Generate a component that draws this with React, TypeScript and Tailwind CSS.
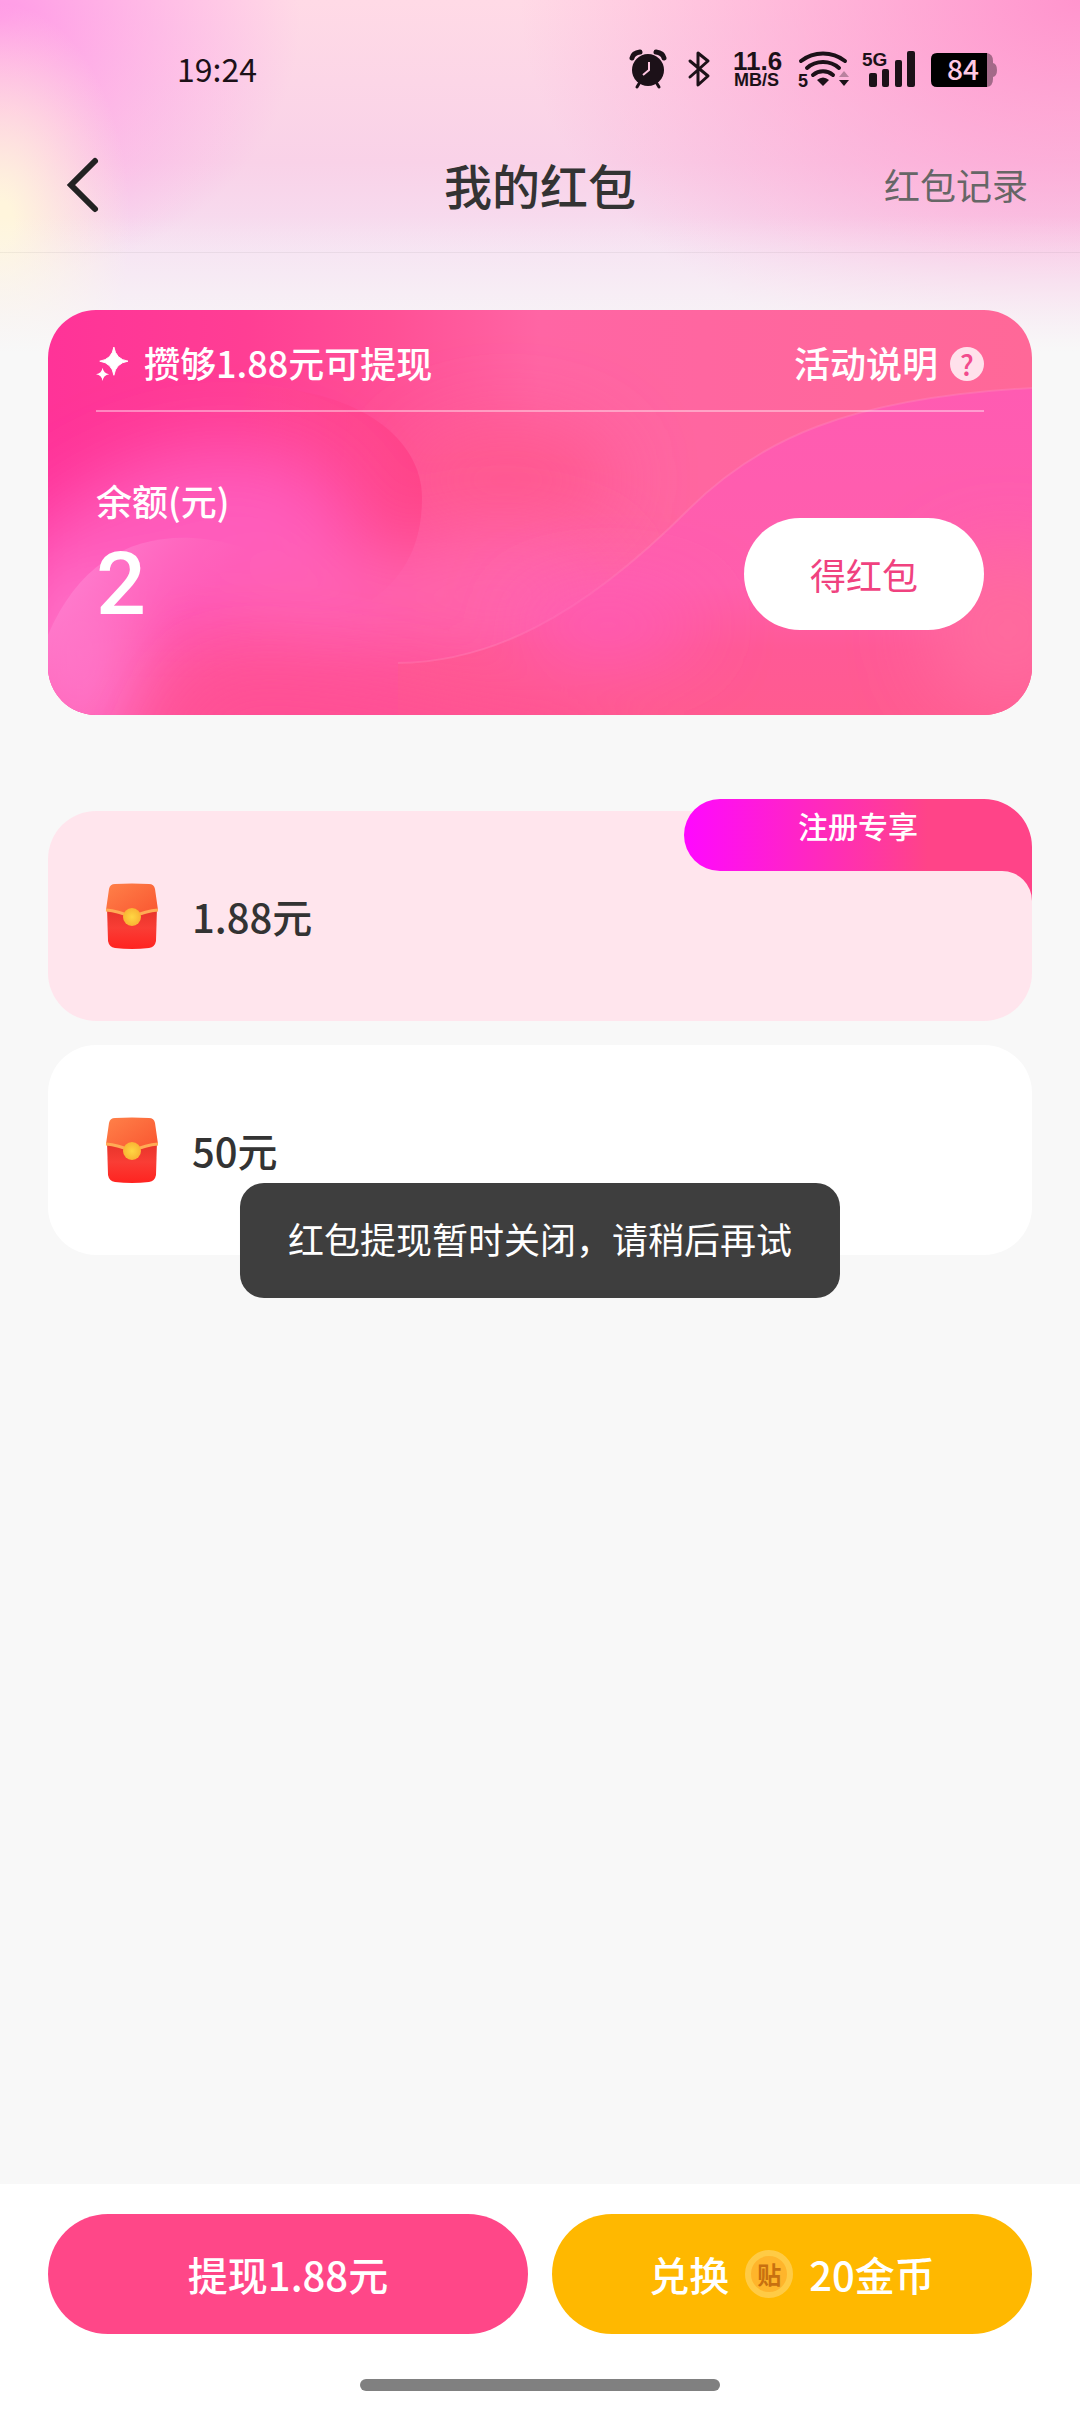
import React from "react";

const SignalIcons: React.FC = () => (
  <svg viewBox="0 0 420 80" className="h-20 w-[420px] font-['Liberation_Sans',sans-serif]" fill="#1c1118">
    {/* alarm */}
    <circle cx="48" cy="40" r="16" />
    <path d="M32 28q1-5 8-6M64 28q-1-5-8-6" stroke="#1c1118" strokeWidth="5" fill="none" strokeLinecap="round" />
    <path d="M40 52l-3 5M56 52l3 5" stroke="#1c1118" strokeWidth="3" strokeLinecap="round" />
    <path d="M49 32v8l-6 5" stroke="#ffc6e2" strokeWidth="2" fill="none" />
    {/* bluetooth */}
    <path d="M90 31l18 15-10 9V23l10 8-18 16" stroke="#1c1118" strokeWidth="3" fill="none" strokeLinejoin="round" strokeLinecap="round" />
    {/* network speed */}
    <text x="133" y="40" fontSize="26" fontWeight="700">11.6</text>
    <text x="134" y="56" fontSize="18" fontWeight="700">MB/S</text>
    {/* wifi */}
    <g stroke="#1c1118" strokeWidth="4" fill="none" strokeLinecap="round">
      <path d="M201 31c13-10 31-10 44 0" />
      <path d="M207 38c9-8 23-8 32 0" />
      <path d="M213 45c6-5 14-5 20 0" />
    </g>
    <path d="M217 50q6-5 12 0l-6 6z" />
    <text x="198" y="57" fontSize="18" fontWeight="700">5</text>
    <path d="M239 47l5-6 5 6z" opacity=".3" />
    <path d="M239 50l5 6 5-6z" />
    {/* cellular */}
    <text x="262" y="36" fontSize="19" fontWeight="700">5G</text>
    <rect x="269" y="43" width="8" height="14" rx="2" />
    <rect x="282" y="39" width="7" height="18" rx="2" />
    <rect x="295" y="30" width="7" height="27" rx="2" />
    <rect x="307" y="21" width="8" height="36" rx="2" />
    {/* battery */}
    <path d="M387 23q6 1 6 8v2q4 1 4 7t-4 7v2q0 7-6 8z" opacity=".4" />
    <path d="M337 23h50v34h-50q-6 0-6-6V29q0-6 6-6z" fill="#000" />
    <text x="347" y="50" fontSize="28" fill="#ffc9e3" className="font-['Noto_Sans_CJK_SC',sans-serif]">84</text>
  </svg>
);

const RedPacket: React.FC = () => (
  <svg viewBox="0 0 54 66" className="mx-[9px] h-[66px] w-[54px]">
    <defs>
      <linearGradient id="flap" x1="0" y1="0" x2="1" y2="1">
        <stop offset="0" stopColor="#ff8149" />
        <stop offset="1" stopColor="#f9532f" />
      </linearGradient>
      <linearGradient id="body" x1="0" y1="0" x2="0" y2="1">
        <stop offset=".1" stopColor="#e8352b" />
        <stop offset=".5" stopColor="#f93d35" />
        <stop offset="1" stopColor="#ff2320" />
      </linearGradient>
      <radialGradient id="seal">
        <stop offset="0" stopColor="#ffd743" />
        <stop offset="1" stopColor="#f9b434" />
      </radialGradient>
    </defs>
    <path d="M2 24h50l-1 34q-1 6-7 7-17 2-34 0-6-1-7-7z" fill="url(#body)" />
    <path d="M10 1q17-1 34 0 5 0 6 5l3 21q-10 1-26 9Q11 28 1 27L4 6q1-5 6-5z" fill="url(#flap)" />
    <path d="M1 27q12 1 26 7 14-6 26-7" stroke="#ffab55" strokeWidth="3" fill="none" />
    <circle cx="27" cy="34" r="9" fill="url(#seal)" />
  </svg>
);

const CardBackground: React.FC = () => (
  <svg viewBox="0 0 984 405" preserveAspectRatio="none" className="absolute inset-0 h-full w-full">
    <defs>
      <linearGradient id="base" x1="0" y1="0" x2="1" y2="0">
        <stop offset="0" stopColor="#ff3398" />
        <stop offset=".2" stopColor="#ff3e94" />
        <stop offset=".35" stopColor="#ff5096" />
        <stop offset=".5" stopColor="#ff65a4" />
        <stop offset="1" stopColor="#ff6898" />
      </linearGradient>
      <linearGradient id="swirl" x1="0" y1="0" x2="1" y2="0">
        <stop offset="0" stopColor="#ff4090" stopOpacity="0" />
        <stop offset="1" stopColor="#ff4489" />
      </linearGradient>
      <linearGradient id="wave" x1="0" y1="0" x2="0" y2="1">
        <stop offset="0" stopColor="#ff5bb2" />
        <stop offset=".6" stopColor="#ff5fac" />
        <stop offset=".8" stopColor="#ff5996" />
        <stop offset="1" stopColor="#ff5b90" />
      </linearGradient>
      <linearGradient id="ribbon" x1="0" y1="0" x2="1" y2=".6">
        <stop offset=".2" stopColor="#ff7fcf" stopOpacity=".75" />
        <stop offset=".6" stopColor="#ff6db8" stopOpacity="0" />
      </linearGradient>
      <filter id="soft" x="-60%" y="-100%" width="220%" height="300%">
        <feGaussianBlur stdDeviation="36" />
      </filter>
    </defs>
    <rect width="984" height="405" fill="url(#base)" />
    <rect y="300" width="500" height="180" fill="#ff5298" filter="url(#soft)" />
    <ellipse cx="460" cy="170" rx="110" ry="60" fill="#ff5990" filter="url(#soft)" />
    <path d="M200 76c110 2 174 52 174 112 0 50-20 80-50 102L160 250z" fill="url(#swirl)" />
    <g filter="url(#soft)">
      <path d="M-40 240Q80 130 200 140t110 140L560 240 500 330H-40z" fill="#ff5cbc" />
      <ellipse cx="280" cy="290" rx="120" ry="50" fill="#ff62b4" />
      <ellipse cx="450" cy="285" rx="110" ry="60" fill="#ff65ab" />
      <ellipse cx="30" cy="360" rx="60" ry="90" fill="#ff76cc" />
    </g>
    <path d="M984 78C800 88 710 130 640 200 530 310 440 352 350 353L350 405h634z" fill="url(#wave)" />
    <path d="M984 78C800 88 710 130 640 200 530 310 440 352 350 353" stroke="#ff7fb5" strokeOpacity=".5" strokeWidth="2" fill="none" />
    <g filter="url(#soft)">
      <path d="M110 450l50-90q100 0 180 15l230 50v60H110z" fill="#ff5094" />
      <ellipse cx="560" cy="315" rx="90" ry="30" fill="#ff5ab8" />
      <ellipse cx="960" cy="320" rx="80" ry="80" fill="#ff6a9e" />
    </g>
    <path d="M0 325c30-70 80-100 145-97 90 6 130 60 110 120L100 405H0z" fill="url(#ribbon)" />
  </svg>
);

const rewards = [
  { amount: "1.88元", tag: "注册专享", selected: true },
  { amount: "50元", tag: "", selected: false },
];

const App: React.FC = () => {
  return (
    <div className="relative flex min-h-screen flex-col bg-[#f8f8f8] font-['Noto_Sans_CJK_SC',sans-serif] font-medium text-[#333]">
      <div className="absolute inset-x-0 top-0 h-[360px] bg-[linear-gradient(to_bottom,transparent_60%,#f8f8f8_98%),radial-gradient(ellipse_130px_220px_at_0%_62%,#fff5dc_10%,transparent),radial-gradient(ellipse_300px_260px_at_0%_5%,#ff9ae6,transparent),radial-gradient(ellipse_560px_380px_at_100%_0%,#ff94cd,transparent),linear-gradient(to_bottom,#ffdae6,#f9d2e8_45%,#f6dff1_70%)]" />

      <div className="relative flex h-[120px] items-center justify-between pr-[60px] pl-[177px] pt-5">
        <span className="pb-1 text-[32px] leading-10 font-normal text-[#1c1118]">19:24</span>
        <SignalIcons />
      </div>

      <header className="relative grid h-[133px] grid-cols-3 items-center border-b border-black/5 px-[52px] pb-1">
        <button aria-label="返回" className="w-fit">
          <svg viewBox="0 0 60 60" className="size-[60px]" fill="none" stroke="#222" strokeWidth="6" strokeLinecap="round">
            <path d="M43 7L19 31l24 24" />
          </svg>
        </button>
        <h1 className="text-center text-5xl leading-[64px]">我的红包</h1>
        <a href="#records" className="justify-self-end text-4xl font-normal text-[#666]">
          红包记录
        </a>
      </header>

      <main className="relative flex-1 px-12 pt-[57px]">
        <section className="relative overflow-hidden rounded-[48px] px-12 text-white">
          <CardBackground />
          <div className="relative flex h-[102px] items-center justify-between border-b-2 border-white/40 pt-1">
            <div className="flex items-center gap-4 text-4xl">
              <svg viewBox="0 0 34 36" className="mt-1 h-9 w-8" fill="white">
                <path d="M19 0q2 13 15 15-13 2-15 15Q17 17 4 15 17 13 19 0z" stroke="white" strokeLinejoin="round" />
                <path d="M7 22q1 6 7 7-6 1-7 7-1-6-7-7 6-1 7-7z" />
              </svg>
              攒够1.88元可提现
            </div>
            <button className="flex items-center gap-3 text-4xl">
              活动说明
              <span className="mt-1 flex size-[34px] items-center justify-center rounded-full bg-white/80 text-[28px] leading-none text-[#f24b8d]">?</span>
            </button>
          </div>
          <div className="relative flex h-[303px] items-center justify-between">
            <div className="flex flex-col pb-4">
              <span className="text-4xl leading-[48px]">余额(元)</span>
              <span className="pt-2 font-['Roboto',sans-serif] text-[88px] leading-[104px]">2</span>
            </div>
            <button className="mt-5 h-28 w-60 rounded-full bg-white text-4xl font-normal text-[#f0427f]">得红包</button>
          </div>
        </section>

        <ul className="mt-24 flex flex-col gap-6">
          {rewards.map((reward) => (
            <li key={reward.amount} className="relative">
              <button
                className={`flex h-[210px] w-full items-center gap-6 rounded-[48px] px-12 text-[40px] ${
                  reward.selected ? "bg-[#ffe5ed]" : "bg-white"
                }`}
              >
                <RedPacket />
                {reward.amount}
              </button>
              {reward.tag && (
                <div className="absolute -top-3 right-0 h-[102px] w-[348px] text-center text-[30px] leading-[52px] text-white">
                  <svg viewBox="0 0 348 102" className="absolute inset-0">
                    <defs>
                      <linearGradient id="tag">
                        <stop offset="0" stopColor="#ff08ff" />
                        <stop offset=".7" stopColor="#ff4488" />
                      </linearGradient>
                    </defs>
                    <path d="M36 0h264a48 48 0 0 1 48 48v54a30 30 0 0 0-30-30H36a36 36 0 0 1 0-72z" fill="url(#tag)" />
                  </svg>
                  <span className="relative">{reward.tag}</span>
                </div>
              )}
            </li>
          ))}
        </ul>
      </main>

      <div
        role="status"
        className="absolute top-[1183px] left-1/2 -translate-x-1/2 rounded-3xl bg-[#3e3e3e] px-12 pt-7 pb-8 text-4xl leading-[55px] font-normal whitespace-nowrap text-white"
      >
        红包提现暂时关闭，请稍后再试
      </div>

      <footer className="relative bg-white px-12 pt-[30px] pb-[21px]">
        <div className="grid grid-cols-2 gap-6 text-[40px] text-white">
          <button className="h-[120px] rounded-full bg-[#ff4788]">提现1.88元</button>
          <button className="flex h-[120px] items-center justify-center gap-4 rounded-full bg-[#ffb800]">
            兑换
            <span className="flex size-12 items-center justify-center rounded-full border-[6px] border-[#ffcb45] bg-[#ffb52b] text-2xl font-bold text-[#c87010]">
              贴
            </span>
            20金币
          </button>
        </div>
        <div className="-mx-12 mt-[45px] flex justify-center">
          <div className="h-3 w-1/3 rounded-full bg-[#808080]" />
        </div>
      </footer>
    </div>
  );
};

export default App;
